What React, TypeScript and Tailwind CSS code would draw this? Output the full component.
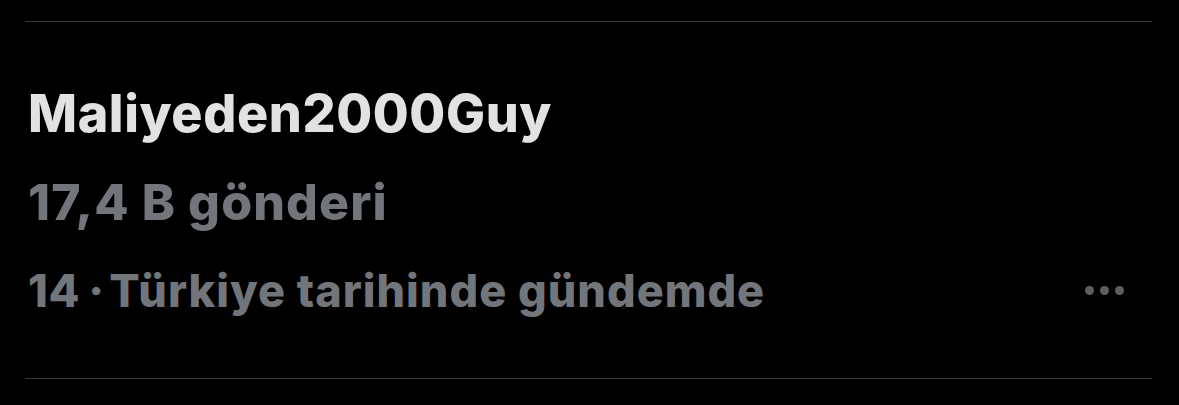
export default function App() {
  return (
    <div
      className="w-[1179px] h-[405px] bg-black px-[25px] pt-[21px]"
      style={{ fontFamily: 'Inter, "Noto Sans", sans-serif' }}
    >
      <div className="w-[1127px] h-px bg-[#38393b]" />
      <div className="pl-[3px] pt-[66px] pb-[65px]">
        <div className="text-[52px] leading-[52px] font-extrabold tracking-[0.6px] text-[#e2e2e2]">
          Maliyeden2000Guy
        </div>
        <div className="mt-[37px] text-[50px] leading-[50px] font-extrabold tracking-[1.1px] text-[#72767a]">
          17,4 B gönderi
        </div>
        <div className="mt-[41px] flex items-center justify-between">
          <div className="flex text-[45px] leading-[45px] font-extrabold text-[#72767a]">
            <span className="tracking-[0.7px]">14</span>
            <span className="ml-[8px]">·</span>
            <span className="ml-[5px] tracking-[1px]">Türkiye tarihinde gündemde</span>
          </div>
          <div className="mr-[30px] flex items-center gap-[6px]">
            <span className="w-[9px] h-[9px] rounded-full bg-[#5c5f62]" />
            <span className="w-[9px] h-[9px] rounded-full bg-[#5c5f62]" />
            <span className="w-[9px] h-[9px] rounded-full bg-[#5c5f62]" />
          </div>
        </div>
      </div>
      <div className="w-[1127px] h-px bg-[#38393b]" />
    </div>
  );
}
